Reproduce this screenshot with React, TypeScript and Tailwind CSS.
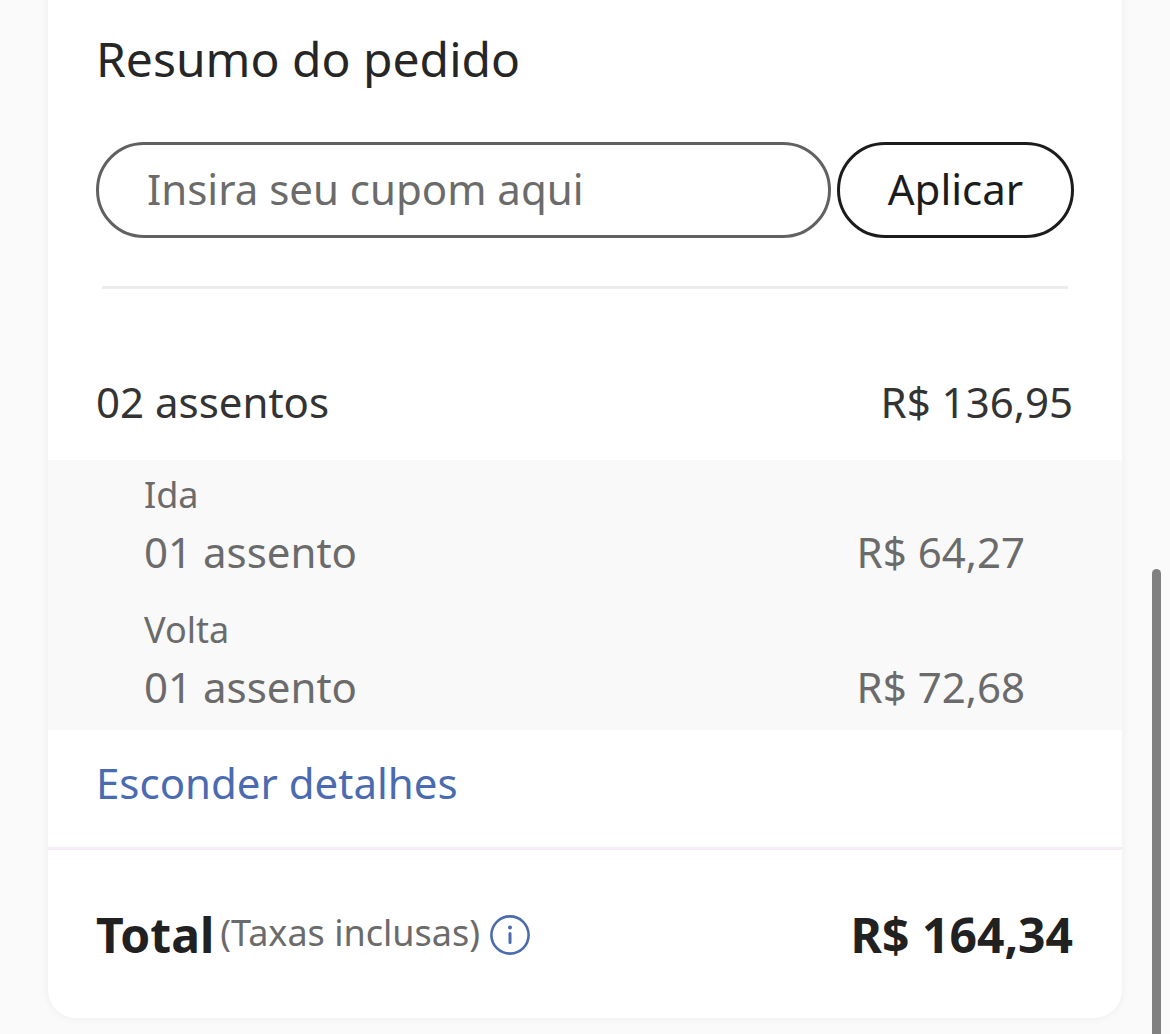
const font = { fontFamily: '"Noto Sans", sans-serif' };

function DetailRow({ title, seats, price }: { title: string; seats: string; price: string }) {
  return (
    <div className="h-[135px] flex flex-col">
      <span className="h-[58px] flex items-center text-[36px] leading-none text-[#6b6b6b]">{title}</span>
      <div className="flex h-[56px] items-center justify-between text-[42px] leading-none text-[#6b6b6b]">
        <span>{seats}</span>
        <span>{price}</span>
      </div>
    </div>
  );
}

function InfoIcon() {
  return (
    <svg viewBox="0 0 40 40" className="ml-[10px] h-[40px] w-[40px] text-[#4a6bb0]" fill="none" stroke="currentColor">
      <circle cx="20" cy="20" r="18.6" strokeWidth="2.6" />
      <path d="M20 18.5v9" strokeWidth="3" strokeLinecap="round" />
      <circle cx="20" cy="12.5" r="2" fill="currentColor" stroke="none" />
    </svg>
  );
}

export default function App() {
  return (
    <div style={font} className="relative h-[1034px] w-[1170px] overflow-hidden bg-[#fafafa]">
      <div className="-mt-[10px] ml-12 h-[1028px] w-[1074px] rounded-b-[28px] bg-white shadow-[0_0_10px_rgba(0,0,0,0.06)] flex flex-col">
        <div className="pl-[48px] pr-[48px] pt-[39px]">
          <h1 className="h-[60px] flex items-center text-[48px] font-normal leading-none text-[#262626]">Resumo do pedido</h1>
          <div className="mt-[53px] flex gap-[6px]">
            <div className="h-[96px] w-[735px] rounded-full border-[3px] border-[#616161] flex items-center pl-[48px] pb-[4px] text-[42px] text-[#6b6b6b]">
              Insira seu cupom aqui
            </div>
            <button className="h-[96px] w-[237px] rounded-full border-[3px] border-[#1c1c1c] pb-[4px] text-[42px] text-[#1c1c1c]">
              Aplicar
            </button>
          </div>
          <div className="mx-[6px] mt-[48px] h-[3px] bg-[#ececec]" />
        </div>
        <div className="mt-[83px] flex h-[60px] items-center justify-between pl-[48px] pr-[49px] text-[42px] leading-none text-[#333333]">
          <span>02 assentos</span>
          <span>R$ 136,95</span>
        </div>
        <div className="mt-[28px] h-[270px] bg-[#f9f9f9] pl-[96px] pr-[97px] pt-[6px]">
          <DetailRow title="Ida" seats="01 assento" price="R$ 64,27" />
          <DetailRow title="Volta" seats="01 assento" price="R$ 72,68" />
        </div>
        <div className="mt-[23px] h-[60px] flex items-center pl-[48px] text-[42px] leading-none text-[#4a6bb0]">Esconder detalhes</div>
        <div className="mt-[34px] h-[3px] bg-[#f5eef9]" />
        <div className="mt-[55px] flex h-[60px] items-center justify-between pl-[48px] pr-[49px]">
          <div className="flex items-center">
            <span className="text-[48px] font-bold leading-none text-[#212121]">Total</span>
            <span className="ml-[6px] pb-[4px] text-[36px] leading-none text-[#6b6b6b]">(Taxas inclusas)</span>
            <InfoIcon />
          </div>
          <span className="text-[48px] font-bold leading-none text-[#212121]">R$ 164,34</span>
        </div>
      </div>
      <div className="absolute left-[1152px] top-[569px] h-[465px] w-[9px] rounded-t-full bg-[#808080]" />
    </div>
  );
}
